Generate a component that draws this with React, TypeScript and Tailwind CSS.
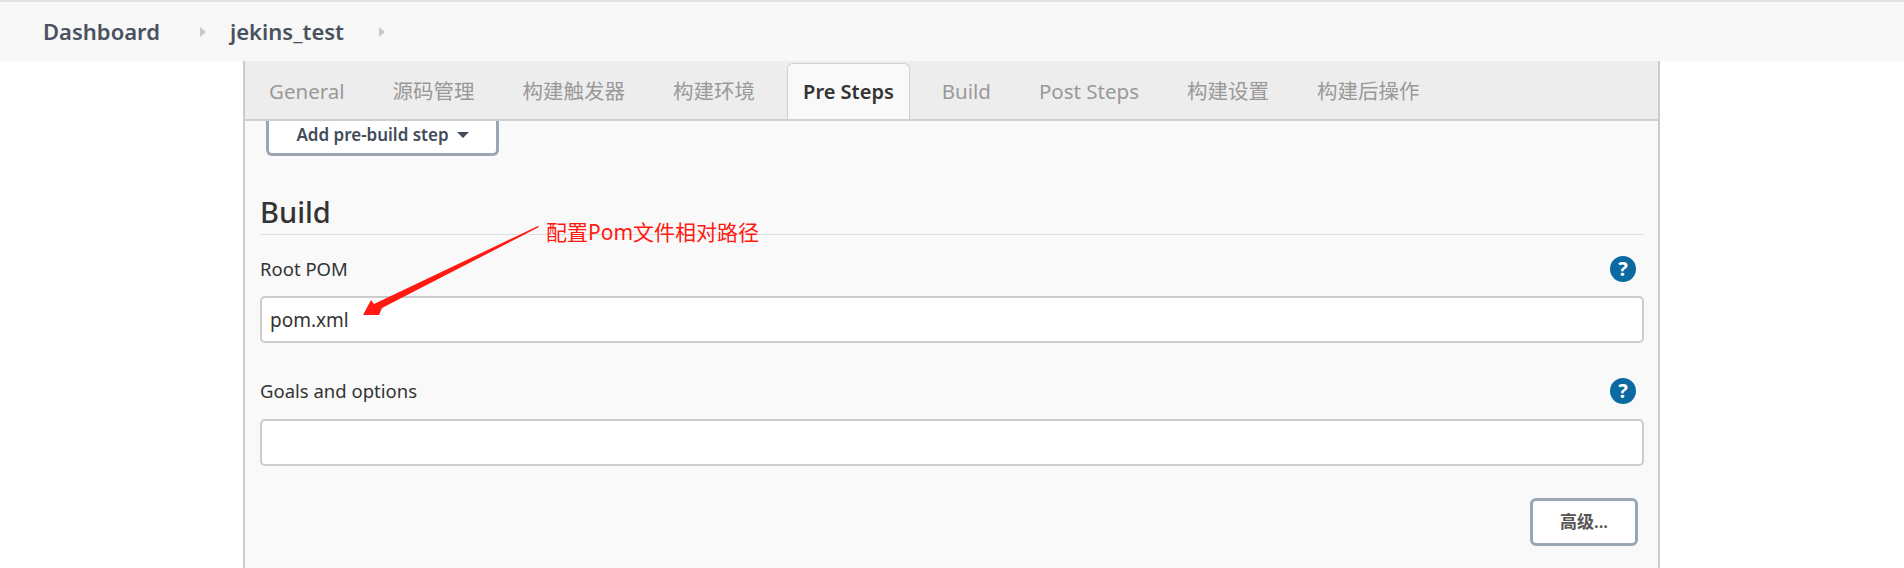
const font = { fontFamily: '"Noto Sans", "Noto Sans CJK SC", sans-serif' };

const tabs = ['General', '源码管理', '构建触发器', '构建环境', 'Pre Steps', 'Build', 'Post Steps', '构建设置', '构建后操作'];

function Chevron() {
  return <span className="h-0 w-0 border-y-[5px] border-l-[6px] border-y-transparent border-l-[#c8c8c8]" />;
}

function FieldLabel({ children }: { children: string }) {
  return (
    <div className="flex h-[26px] items-center justify-between pr-[8px] text-[18.5px] leading-none text-[#333]">
      <span>{children}</span>
      <span className="flex h-[26px] w-[26px] items-center justify-center rounded-full bg-[#0b6aa2] text-[20px] font-bold leading-none text-white">?</span>
    </div>
  );
}

export default function App() {
  return (
    <div className="relative h-[568px] w-[1904px] overflow-hidden bg-white" style={font}>
      {/* Breadcrumb */}
      <header className="flex h-[61px] items-center border-t-2 border-[#e0e2e8] bg-[#f8f8f8] pl-[43px] text-[22px] font-semibold text-[#4a5260]">
        <span className="w-[120px]">Dashboard</span>
        <span className="ml-[37px] flex"><Chevron /></span>
        <span className="ml-[24px]">jekins_test</span>
        <span className="ml-[35px] flex"><Chevron /></span>
      </header>

      {/* Config panel */}
      <main className="ml-[243px] h-[507px] w-[1417px] border-x-2 border-[#cccccc] bg-[#f9f9f9]">
        <nav className="flex h-[60px] items-end gap-4 border-b-2 border-[#cfcfcf] bg-[#ededed] pl-[8px]">
          {tabs.map((tab) => (
            <div
              key={tab}
              className={
                tab === 'Pre Steps'
                  ? 'flex h-[56px] items-center rounded-t-md border-x border-t border-[#d0d0d0] bg-[#f9f9f9] px-[15px] text-[20px] font-semibold text-[#333]'
                  : 'flex h-[56px] items-center border-x border-t border-transparent px-[15px] text-[20.5px] text-[#999]'
              }
            >
              {tab}
            </div>
          ))}
        </nav>

        <div className="pl-[15px] pr-[14px]">
          <button className="ml-[6px] flex h-[35px] w-[233px] items-center justify-center gap-[8px] rounded-b-md border-x-[3px] border-b-[3px] border-[#9aa7b2] bg-white pb-[5px] text-[17px] font-semibold text-[#434c5a]">
            Add pre-build step
            <span className="h-0 w-0 border-x-[6px] border-t-[6px] border-x-transparent border-t-[#434c5a]" />
          </button>

          <h2 className="mt-[37px] border-b border-[#dddddd] pb-[3px] text-[29px] font-medium leading-[38px] text-[#333]">Build</h2>

          <div className="mt-[21px]">
            <FieldLabel>Root POM</FieldLabel>
            <input
              readOnly
              value="pom.xml"
              className="mt-[14px] block h-[47px] w-full rounded-[5px] border-2 border-[#cccccc] bg-white px-[8px] text-[19px] text-[#333]"
            />
          </div>

          <div className="mt-[35px]">
            <FieldLabel>Goals and options</FieldLabel>
            <input readOnly className="mt-[15px] block h-[47px] w-full rounded-[5px] border-2 border-[#cccccc] bg-white" />
          </div>

          <div className="mt-[32px] flex justify-end pr-[6px]">
            <button className="h-[48px] w-[108px] rounded-md border-[3px] border-[#9aa7b2] bg-white text-[17px] font-semibold text-[#555]">高级...</button>
          </div>
        </div>
      </main>

      {/* Annotation */}
      <svg className="absolute left-0 top-0" width="1904" height="568">
        <polygon points="538,226 539,227 382,308 379,315 363,315 371,300 374,304" fill="#ff1a12" />
      </svg>
      <span className="absolute left-[546px] top-[216px] text-[21px] leading-[32px] text-[#ff1a12]">配置Pom文件相对路径</span>
    </div>
  );
}
